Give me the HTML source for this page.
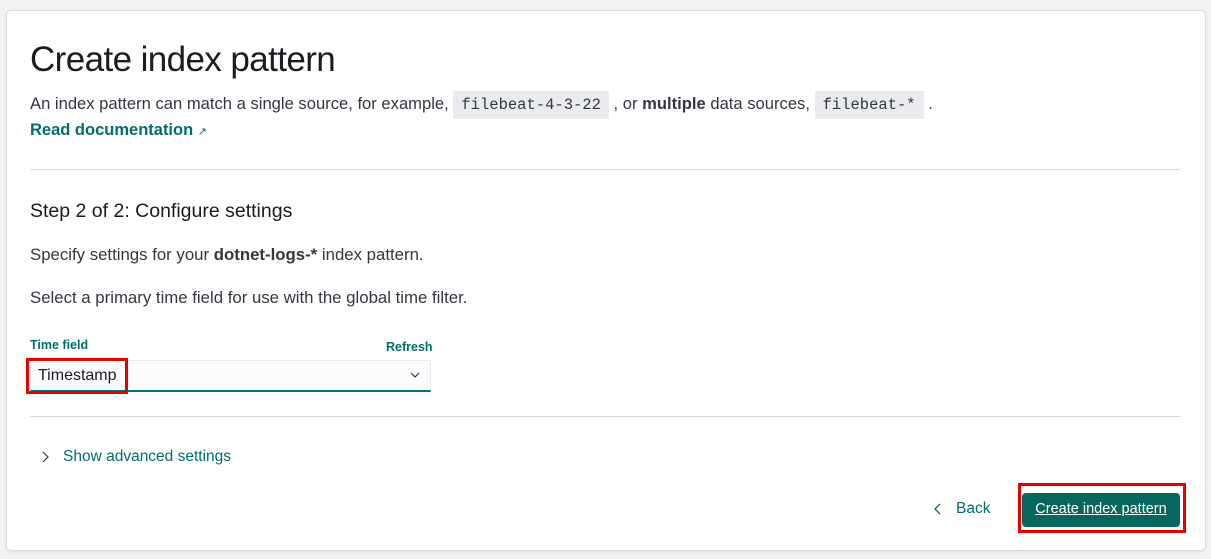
<!DOCTYPE html>
<html><head><style>
body{margin:0;background:#f1f2f4;font-family:"Liberation Sans",sans-serif;color:#343741;width:1211px;height:559px;overflow:hidden;position:relative}
.panel{position:absolute;left:6px;top:10px;width:1198px;height:539px;background:#fff;border:1px solid #d8dbe0;border-radius:5px;box-shadow:0 1px 3px rgba(0,0,0,.08)}
.a{position:absolute;white-space:nowrap}
h1{position:absolute;margin:0;font-weight:normal;font-size:35px;color:#1a1c21;letter-spacing:-0.6px}
code{font-family:"Liberation Mono",monospace;background:#e9ebee;padding:5px 8px;font-size:15.5px;color:#343741}
.hr{position:absolute;width:1150px;height:1px;background:#d3dae6}
.red{position:absolute;border:3px solid #e60000}
</style></head><body>
<div class="panel"></div>
<h1 style="left:30px;top:40px">Create index pattern</h1>
<div class="a" style="left:30px;top:94px;font-size:16.6px">An index pattern can match a single source, for example, <code>filebeat-4-3-22</code> , or <b>multiple</b> data sources, <code>filebeat-*</code> .</div>
<div class="a" style="left:30px;top:121px;font-size:16.5px;font-weight:bold;color:#006e6a">Read documentation <span style="font-size:11px;font-weight:normal">&#8599;</span></div>
<div class="hr" style="left:30px;top:169px"></div>
<div class="a" style="left:30px;top:200px;font-size:19.5px;color:#1a1c21">Step 2 of 2: Configure settings</div>
<div class="a" style="left:30px;top:245px;font-size:16.8px">Specify settings for your <b>dotnet-logs-*</b> index pattern.</div>
<div class="a" style="left:30px;top:288px;font-size:16.8px">Select a primary time field for use with the global time filter.</div>
<div class="a" style="left:30px;top:338px;font-size:12.5px;font-weight:bold;color:#006e6a">Time field</div>
<div class="a" style="left:386px;top:340px;font-size:12.5px;font-weight:bold;color:#006e6a">Refresh</div>
<div class="a" style="left:30px;top:360px;width:399px;height:29px;background:#fbfcfd;border:1px solid #e8eaee;border-bottom:2px solid #07756d"></div>
<div class="a" style="left:38px;top:367px;font-size:16px;color:#1a1c21">Timestamp</div>
<svg class="a" style="left:409px;top:370px" width="12" height="10"><path d="M2 3 L6 7 L10 3" fill="none" stroke="#343741" stroke-width="1.2"/></svg>
<div class="red" style="left:26px;top:358px;width:96px;height:30px"></div>
<div class="hr" style="left:30px;top:416px"></div>
<svg class="a" style="left:40px;top:450px" width="10" height="14"><path d="M3 2 L8 7 L3 12" fill="none" stroke="#343741" stroke-width="1.2"/></svg>
<div class="a" style="left:63px;top:448px;font-size:15.5px;color:#006e6a">Show advanced settings</div>
<svg class="a" style="left:933px;top:502px" width="10" height="14"><path d="M7 2 L2 7 L7 12" fill="none" stroke="#006e6a" stroke-width="1.3"/></svg>
<div class="a" style="left:956px;top:500px;font-size:15.5px;color:#006e6a">Back</div>
<div class="a" style="left:1022px;top:493px;width:158px;height:34px;background:#07675f;border-radius:4px;color:#fff;font-size:14.5px;text-align:center;line-height:33px;text-decoration:underline">Create index pattern</div>
<div class="red" style="left:1018px;top:483px;width:162px;height:44px"></div>
</body></html>
